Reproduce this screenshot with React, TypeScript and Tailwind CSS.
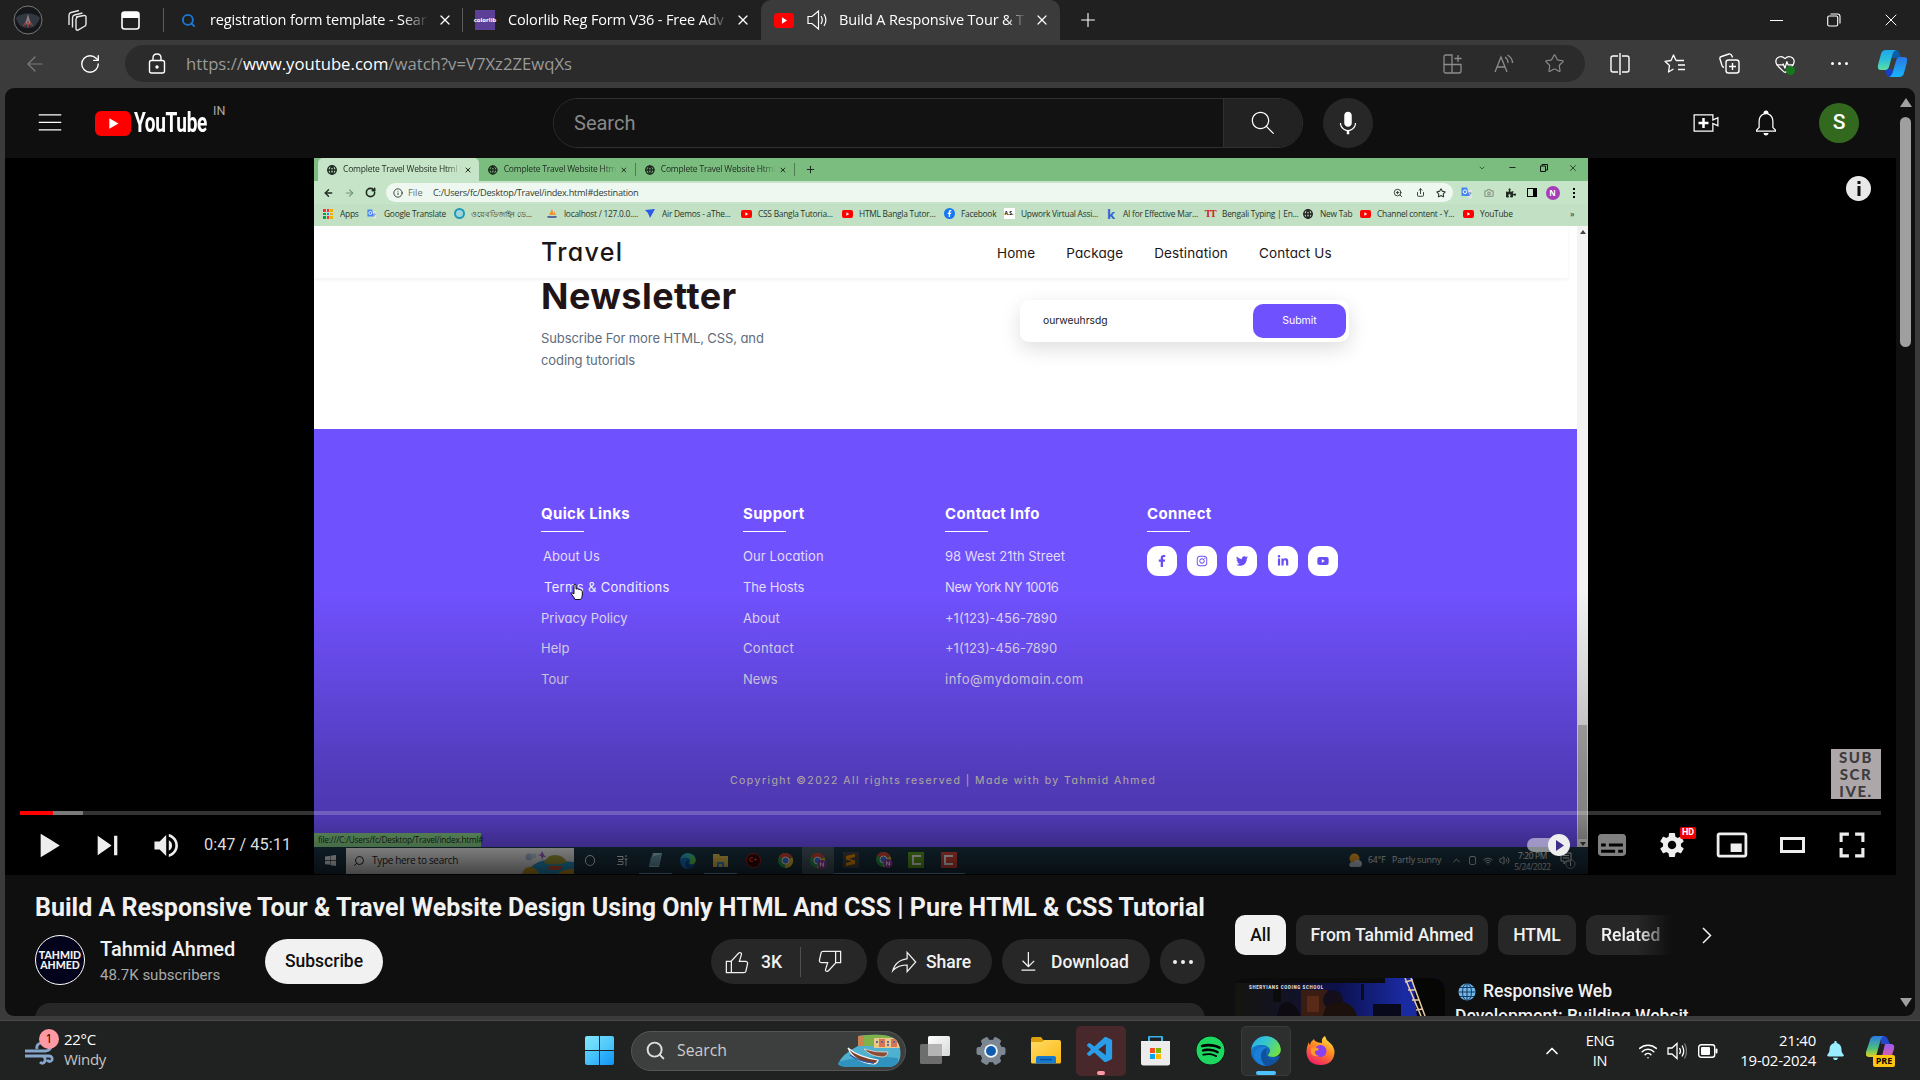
import React from "react";
import {
  Star, X, Plus, RotateCw, ArrowLeft, ArrowRight, Globe, Info, Search,
  ChevronUp, ChevronDown, Wifi, Volume2, HeartPulse, Share, ZoomIn,
  Camera, Minus,
} from "lucide-react";
import { FaFacebookF, FaInstagram, FaTwitter, FaLinkedinIn, FaYoutube, FaSpotify, FaPuzzlePiece, FaBell } from "react-icons/fa";
import { VscVscode } from "react-icons/vsc";

const UI = "font-['Open_Sans',sans-serif]";
const POP = "font-['Inter',sans-serif] [font-feature-settings:'cv11']";

type BoxProps = { className?: string; children?: React.ReactNode };

const Cell = ({ className = "", children }: BoxProps) => (
  <div className={`flex shrink-0 items-center justify-center ${className}`}>{children}</div>
);

const Glyph = ({ d, size, view = "0 0 24 24", className = "", evenOdd = false }: {
  d: string; size: number; view?: string; className?: string; evenOdd?: boolean;
}) => (
  <svg width={size} height={size} viewBox={view} className={`shrink-0 ${className}`} fill="currentColor" fillRule={evenOdd ? "evenodd" : "nonzero"}>
    <path d={d} />
  </svg>
);

const THUMB =
  "M18.77,11h-4.23l1.52-4.94C16.38,5.03,15.54,4,14.38,4c-0.58,0-1.14,0.24-1.52,0.65L7,11H3v10h4h1h9.43 c1.06,0,1.98-0.67,2.19-1.61l1.34-6C21.23,12.15,20.18,11,18.77,11z M7,20H4v-8h3V20z M19.98,13.17l-1.34,6 C18.54,19.65,18.03,20,17.43,20H8v-8.61l5.6-6.06C13.79,5.12,14.08,5,14.38,5c0.26,0,0.5,0.11,0.63,0.3 c0.07,0.1,0.15,0.26,0.09,0.47l-1.52,4.94L13.18,12h1.35h4.23c0.41,0,0.8,0.17,1.03,0.46C19.92,12.61,20.05,12.86,19.98,13.17z";
const SHARE =
  "M15,5.63L20.66,12L15,18.37V15v-1h-1c-3.96,0-7.14,1-9.75,3.09c1.84-4.07,5.11-6.4,9.89-7.1L15,9.86V9V5.63 M14,3v6 C6.22,10.13,3.11,15.33,2,21c2.78-3.97,6.44-6,12-6v6l8-9L14,3L14,3z";
const DOWNLOAD = "M17 18v1H6v-1h11zm-.5-6.6-.7-.7-3.8 3.7V4h-1v10.4l-3.8-3.8-.7.7 5 5 5-4.9z";
const MIC =
  "M12 3C10.34 3 9 4.37 9 6.07V11.93C9 13.63 10.34 15 12 15C13.66 15 15 13.63 15 11.93V6.07C15 4.37 13.66 3 12 3Z M18.5 12H17.5C17.5 15.03 15.03 17.5 12 17.5C8.97 17.5 6.5 15.03 6.5 12H5.5C5.5 15.24 7.89 17.93 11 18.41V21H13V18.41C16.11 17.93 18.5 15.24 18.5 12Z";
const SEARCH =
  "M20.87,20.17l-5.59-5.59C16.35,13.35,17,11.75,17,10c0-3.87-3.13-7-7-7s-7,3.13-7,7s3.13,7,7,7c1.75,0,3.35-0.65,4.58-1.71 l5.59,5.59L20.87,20.17z M10,16c-3.31,0-6-2.69-6-6s2.69-6,6-6s6,2.69,6,6S13.31,16,10,16z";
const CREATE =
  "M14,13h-3v3H9v-3H6v-2h3V8h2v3h3V13z M17,6H3v12h14v-6.39l4,1.83V8.56l-4,1.83V6 M18,5v3.83L22,7v8l-4-1.83V19H2V5H18L18,5 z";
const BELL =
  "M10,20h4c0,1.1-0.9,2-2,2S10,21.1,10,20z M20,17.35V19H4v-1.65l2-1.88v-5.15c0-2.92,1.56-5.22,4-5.98V3.96 c0-1.42,1.49-2.5,2.99-1.76C13.64,2.52,14,3.23,14,3.96l0,0.39c2.44,0.75,4,3.06,4,5.98v5.15L20,17.35z M19,17.77l-2-1.88v-5.47 c0-2.47-1.19-4.36-3.13-5.1c-1.26-0.53-2.64-0.5-3.84,0.03C8.15,6.11,7,7.99,7,10.42v5.47l-2,1.88V18h14V17.77z";
const MENU = "M21,6H3V5h18V6z M21,11H3v1h18V11z M21,17H3v1h18V17z";
const PLAY = "M 12,26 18.5,22 18.5,14 12,10 z M 18.5,22 25,18 25,18 18.5,14 z";
const NEXT = "M 12,24 20.5,18 12,12 V 24 z M 22,12 v 12 h 2 V 12 h -2 z";
const VOLUME =
  "M8,21 L12,21 L17,26 L17,10 L12,15 L8,15 L8,21 Z M19,14 L19,22 C20.48,21.32 21.5,19.77 21.5,18 C21.5,16.26 20.48,14.74 19,14 Z M19,11.29 C21.89,12.15 24,14.83 24,18 C24,21.17 21.89,23.85 19,24.71 L19,26.77 C23.01,25.86 26,22.28 26,18 C26,13.72 23.01,10.14 19,9.23 L19,11.29 Z";
const CAPTIONS =
  "M11,11 C9.9,11 9,11.9 9,13 L9,23 C9,24.1 9.9,25 11,25 L25,25 C26.1,25 27,24.1 27,23 L27,13 C27,11.9 26.1,11 25,11 L11,11 Z M11,17 L14,17 L14,19 L11,19 L11,17 Z M20,23 L11,23 L11,21 L20,21 L20,23 Z M25,23 L22,23 L22,21 L25,21 L25,23 Z M25,19 L16,19 L16,17 L25,17 L25,19 Z";
const SETTINGS =
  "m 23.94,18.78 c .03,-0.25 .05,-0.51 .05,-0.78 0,-0.27 -0.02,-0.52 -0.05,-0.78 l 1.68,-1.32 c .15,-0.12 .19,-0.33 .09,-0.51 l -1.6,-2.76 c -0.09,-0.17 -0.31,-0.24 -0.48,-0.17 l -1.99,.8 c -0.41,-0.32 -0.86,-0.58 -1.35,-0.78 l -0.30,-2.12 c -0.02,-0.19 -0.19,-0.33 -0.39,-0.33 l -3.2,0 c -0.2,0 -0.36,.14 -0.39,.33 l -0.30,2.12 c -0.48,.2 -0.93,.47 -1.35,.78 l -1.99,-0.8 c -0.18,-0.07 -0.39,0 -0.48,.17 l -1.6,2.76 c -0.10,.17 -0.05,.39 .09,.51 l 1.68,1.32 c -0.03,.25 -0.05,.52 -0.05,.78 0,.26 .02,.52 .05,.78 l -1.68,1.32 c -0.15,.12 -0.19,.33 -0.09,.51 l 1.6,2.76 c .09,.17 .31,.24 .48,.17 l 1.99,-0.8 c .41,.32 .86,.58 1.35,.78 l .30,2.12 c .02,.19 .19,.33 .39,.33 l 3.2,0 c .2,0 .36,-0.14 .39,-0.33 l .30,-2.12 c .48,-0.2 .93,-0.47 1.35,-0.78 l 1.99,.8 c .18,.07 .39,0 .48,-0.17 l 1.6,-2.76 c .09,-0.17 .05,-0.39 -0.09,-0.51 l -1.68,-1.32 0,0 z m -5.94,2.01 c -1.54,0 -2.8,-1.25 -2.8,-2.8 0,-1.54 1.25,-2.8 2.8,-2.8 1.54,0 2.8,1.25 2.8,2.8 0,1.54 -1.25,2.8 -2.8,2.8 l 0,0 z";
const MINI =
  "M25,17 L17,17 L17,23 L25,23 L25,17 Z M29,25 L29,10.98 C29,9.88 28.1,9 27,9 L9,9 C7.9,9 7,9.88 7,10.98 L7,25 C7,26.1 7.9,27 9,27 L27,27 C28.1,27 29,26.1 29,25 Z M27,25.02 L9,25.02 L9,10.97 L27,10.97 L27,25.02 Z";
const FULL =
  "M10,16h2v-4h4v-2h-6z M20,10v2h4v4h2v-6z M24,24h-4v2h6v-6h-2z M12,20h-2v6h6v-2h-4z";

const YtMark = ({ w, h }: { w: number; h: number }) => (
  <svg width={w} height={h} viewBox="0 0 36 25" preserveAspectRatio="none" className="shrink-0">
    <rect width="36" height="25" rx="6" fill="#ff0000" />
    <path d="M14.3 7.2v10.6l9.2-5.3z" fill="#fff" />
  </svg>
);

const GoogleTranslate = ({ size }: { size: number }) => (
  <svg width={size} height={size} viewBox="0 0 24 24" className="shrink-0">
    <path d="M9 6h13v17H14z" fill="#dfe3ea" />
    <path d="M1 1h11l5 17H1z" fill="#4687f4" />
    <circle cx="8" cy="9.5" r="3.6" fill="none" stroke="#fff" strokeWidth="2" />
    <path d="M15 12h6M18 11v2M16 18l4-6" stroke="#5f7fb8" strokeWidth="1.4" />
  </svg>
);

/* ---------- Edge window ---------- */

const TabStrip = () => (
  <div className={`flex h-10 shrink-0 bg-[#202020] text-[14.5px] text-white ${UI}`}>
    <Cell className="w-14">
      <svg width="30" height="30" viewBox="0 0 30 30">
        <circle cx="15" cy="15" r="14" fill="#15171b" stroke="#777" strokeWidth="1" />
        <path d="M3 13c4-6 20-6 24 0-3 7-6 10-12 10S5 20 3 13z" fill="#39414c" opacity=".8" />
        <path d="M15 9l2 7 3 5-4-2-1 3-1-3-4 2 3-5z" fill="#8f7c7e" />
        <path d="M15 16v7M11 20l2-2M19 20l-2-2" stroke="#9d2a2a" strokeWidth="1.2" />
      </svg>
    </Cell>
    <Cell className="w-11 pr-[3px]">
      <svg width="23" height="23" viewBox="0 0 23 23" fill="none" stroke="#e8e8e8" strokeWidth="1.4">
        <path d="M11 8l8-1.500q2-.2 2 1.500v7q0 1.500-1 2l-7 4q-2 .8-2-1.500v-9q0-2 2-2.600z" />
        <path d="M7.500 18.500V9q0-2.500 2-3l8-2M4 16V6.500q0-2.500 2-3l8-2" />
      </svg>
    </Cell>
    <Cell className="w-[60px]">
      <svg width="19" height="19" viewBox="0 0 19 19">
        <rect x="1" y="1" width="17" height="17" rx="2.500" fill="none" stroke="#fff" strokeWidth="1.600" />
        <path d="M1 3q0-2 2-2h13q2 0 2 2v4H1zM1 6h5v1H1z" fill="#fff" />
      </svg>
    </Cell>
    <div className="my-2 ml-[3px] w-px bg-[#5c5c5c]" />
    <div className="flex w-[298px] shrink-0 items-center pl-[17px]">
      <Search size={15} strokeWidth={3} color="#1a7ad9" />
      <span className="ml-[14px] w-[219px] overflow-hidden whitespace-nowrap tracking-[-0.15px] [mask-image:linear-gradient(to_right,black_88%,transparent)]">registration form template - Sear</span>
      <X size={16} className="ml-[8px]" strokeWidth={1.8} />
    </div>
    <div className="my-2 w-px bg-[#5c5c5c]" />
    <div className="flex w-[298px] shrink-0 items-center pl-[12px]">
      <Cell className="h-5 w-5 bg-[#5c3f96] text-[6px] font-bold">colorlib</Cell>
      <span className="ml-[13px] w-[220px] overflow-hidden whitespace-nowrap tracking-[-0.15px] [mask-image:linear-gradient(to_right,black_90%,transparent)]">Colorlib Reg Form V36 - Free Adv</span>
      <X size={16} className="ml-[7px]" strokeWidth={1.8} />
    </div>
    <div className="flex w-[299px] shrink-0 items-center rounded-t-[10px] bg-[#3b3b3b] pl-[13px]">
      <YtMark w={20} h={15} />
      <svg width="21" height="20" viewBox="0 0 21 20" fill="none" stroke="#fff" strokeWidth="1.200" className="ml-[13px]">
        <path d="M1 6.500h4L11.500 1v18L5 13.500H1zM14 6q2.500 4 0 8M17 4q3.800 6 0 12" />
      </svg>
      <span className="ml-[11px] w-[187px] overflow-hidden whitespace-nowrap tracking-[-0.15px] [mask-image:linear-gradient(to_right,black_90%,transparent)]">Build A Responsive Tour &amp; T</span>
      <X size={16} className="ml-[8px]" strokeWidth={1.8} />
    </div>
    <Cell className="w-[56px]"><Plus size={22} strokeWidth={1.2} /></Cell>
    <div className="flex grow justify-end">
      <Cell className="w-[57px]"><div className="h-px w-[13px] bg-white" /></Cell>
      <Cell className="w-[57px]">
        <svg width="14" height="14" viewBox="0 0 14 14" fill="none" stroke="#fff" strokeWidth="1.100">
          <rect x=".7" y="3" width="10" height="10" rx="1.500" /><path d="M3.500 1h7q2.500 0 2.500 2.500v7" />
        </svg>
      </Cell>
      <Cell className="w-[58px]"><X size={20} strokeWidth={1.2} /></Cell>
    </div>
  </div>
);

const AddressBar = () => (
  <div className={`flex h-12 shrink-0 items-center bg-[#3b3b3b] pb-px text-white ${UI}`}>
    <Cell className="ml-[21px] w-7 text-[#7d7d7d]"><ArrowLeft size={24} strokeWidth={1.2} /></Cell>
    <Cell className="ml-[27px] w-7"><RotateCw size={22} strokeWidth={1.5} /></Cell>
    <div className="ml-[21px] flex h-[37px] w-[1460px] shrink-0 items-center rounded-full bg-[#2b2b2b] pl-[21px]">
      <svg width="22" height="22" viewBox="0 0 22 22" fill="none" stroke="#fff" strokeWidth="1.400">
        <rect x="3.500" y="7.500" width="15" height="12.500" rx="2" /><path d="M7 7.500V5q0-4 4-4t4 4v2.500" /><circle cx="11" cy="14" r="1" fill="#fff" />
      </svg>
      <div className="ml-[18px] grow pt-px text-[16.700px] whitespace-nowrap text-[#9a9a9a]">
        https://<span className="text-white">www.youtube.com</span>/watch?v=V7Xz2ZEwqXs
      </div>
      <Cell className="w-[50px] text-[#8c8c8c]">
        <svg width="20" height="20" viewBox="0 0 20 20" fill="none" stroke="currentColor" strokeWidth="1.300">
          <path d="M1 10.500V3q0-2 2-2h6v18H3q-2 0-2-2v-6.500h17V17q0 2-2 2H9M15 1v7M11.500 4.500h7" />
        </svg>
      </Cell>
      <Cell className="w-[51px] text-[#8c8c8c]">
        <svg width="20" height="20" viewBox="0 0 20 20" fill="none" stroke="currentColor" strokeWidth="1.300">
          <path d="M1 18L7 3l6 15M3 13h8M11 3q3 2 3 6M13.500 1q5 3 5 8" />
        </svg>
      </Cell>
      <Cell className="mr-[6px] w-[50px] text-[#8c8c8c]"><Star size={21} strokeWidth={1.3} /></Cell>
    </div>
    <Cell className="ml-[7px] w-[55px]">
      <svg width="20" height="22" viewBox="0 0 20 22" fill="none" stroke="#fff" strokeWidth="1.400">
        <path d="M8 3H3Q1 3 1 5v12q0 2 2 2h5M12 3h5q2 0 2 2v12q0 2-2 2h-5M10 0v22" />
      </svg>
    </Cell>
    <Cell className="w-[55px]">
      <svg width="22" height="20" viewBox="0 0 22 20" fill="none" stroke="#fff" strokeWidth="1.300" strokeLinejoin="round">
        <path d="M12 6.500L9.500 1 7 6.500l-6 .8 4.500 4.200L4.500 18l5-3M12 6.500h8M14 11h7M14 15.500h7" />
      </svg>
    </Cell>
    <Cell className="w-[55px]">
      <svg width="21" height="21" viewBox="0 0 21 21" fill="none" stroke="#fff" strokeWidth="1.400">
        <rect x="7" y="7" width="13" height="13" rx="2.500" /><path d="M13.500 10v7M10 13.500h7M5 14.500q-1.500-.5-2-2L1 6Q.5 4 2.500 3.500L10 1q2-.5 3 2l.5 1.500" />
      </svg>
    </Cell>
    <Cell className="w-[55px]">
      <div className="relative">
        <HeartPulse size={22} strokeWidth={1.4} />
        <div className="absolute top-[13px] left-[12px] h-[9px] w-[9px] rounded-full bg-[#15791c]" />
      </div>
    </Cell>
    <Cell className="w-[55px] gap-[4px]">
      {[0, 1, 2].map((i) => <div key={i} className="h-[3px] w-[3px] rounded-full bg-white" />)}
    </Cell>
    <Cell className="w-[51px]">
      <svg width="31" height="27" viewBox="0 0 31 27">
        <defs>
          <linearGradient id="cpA" x1="0" y1="0" x2="0" y2="1"><stop offset="0" stopColor="#1fa6ec" /><stop offset=".5" stopColor="#2bc0d8" /><stop offset="1" stopColor="#5fe0a0" /></linearGradient>
          <linearGradient id="cpB" x1="0" y1="0" x2="0" y2="1"><stop offset="0" stopColor="#2a78e8" /><stop offset="1" stopColor="#18b4f8" /></linearGradient>
        </defs>
        <path d="M15 0h4q3 0 4 5l1 3H14z" fill="#0b5fa8" />
        <path d="M7 19l8 0 3 8h-5q-3 0-4-4z" fill="#1740c8" />
        <path d="M9 0h10q-3 1-4 6l-3 11q-1 3-4 3H4q-4 0-3-5L4 4q1-4 5-4z" fill="url(#cpA)" />
        <path d="M22 27H12q3-1 4-6l3-10q1-4 4-4h4q4 0 3 5l-3 11q-1 4-5 4z" fill="url(#cpB)" />
      </svg>
    </Cell>
  </div>
);

/* ---------- YouTube ---------- */

const Masthead = () => (
  <div className="flex h-[70px] shrink-0 items-center text-white">
    <Cell className="ml-[30px] w-[30px]"><Glyph d={MENU} size={30} /></Cell>
    <div className="ml-[30px] flex w-[458px] shrink-0 items-center">
      <YtMark w={36} h={25} />
      <div className="ml-[3px] w-[74px]">
        <span className="inline-block origin-left scale-x-[0.68] font-['Roboto'] text-[28px] leading-7 font-bold tracking-[-0.5px]">YouTube</span>
      </div>
      <span className="-mt-[24px] ml-[5px] font-['Roboto'] text-[12.5px] text-[#aaa]">IN</span>
    </div>
    <div className="flex h-[50px] w-[750px] shrink-0 overflow-hidden rounded-full border border-[#303030]">
      <div className="flex w-[670px] shrink-0 items-center border-r border-[#303030] bg-[#121212] pl-5 font-['Roboto'] text-[20px] text-[#888]">Search</div>
      <Cell className="grow bg-[#222]"><Glyph d={SEARCH} size={30} /></Cell>
    </div>
    <Cell className="ml-5 h-[50px] w-[50px] rounded-full bg-[#272727]"><Glyph d={MIC} size={30} /></Cell>
    <div className="grow" />
    <Cell className="w-[50px]"><Glyph d={CREATE} size={30} /></Cell>
    <Cell className="ml-[10px] w-[50px]"><Glyph d={BELL} size={30} /></Cell>
    <Cell className="mr-[37px] ml-[28px] h-10 w-10 rounded-full bg-[#33691e] font-['Roboto'] text-[21px] font-medium">S</Cell>
  </div>
);

const travelTabs = [
  { w: "w-[161px]", active: true },
  { w: "w-[157px]", active: false },
  { w: "w-[159px]", active: false },
];

const BookmarkIcon = ({ kind }: { kind: string }) => {
  switch (kind) {
    case "apps":
      return (
        <div className="grid grid-cols-3 gap-px">
          {["bg-red-500", "bg-red-500", "bg-yellow-500", "bg-green-600", "bg-blue-500", "bg-yellow-500", "bg-green-600", "bg-red-500", "bg-yellow-500"].map((c, i) => (
            <div key={i} className={`h-[2.5px] w-[2.5px] ${c}`} />
          ))}
        </div>
      );
    case "tr": return <GoogleTranslate size={10} />;
    case "globe": return <Globe size={10} strokeWidth={3.500} color="#222" />;
    case "swirl": return <div className="h-[11px] w-[11px] rounded-full border-2 border-[#1f9ab5] bg-[#9fd6dd]" />;
    case "sail": return <svg width="10" height="10" viewBox="0 0 10 10"><path d="M5 0l2 6H2zM7 2l2 4H7z" fill="#f0922e" /><path d="M0 7h10l-1 2H1z" fill="#5a6a9a" /></svg>;
    case "bird": return <svg width="10" height="9" viewBox="0 0 10 9"><path d="M0 1l10-1-5 9-2-5z" fill="#2a5be8" /></svg>;
    case "fb": return <div className="flex h-[11px] w-[11px] items-center justify-center rounded-full bg-[#1877f2]"><FaFacebookF size={7} color="#fff" /></div>;
    case "as": return <div className="flex h-[11px] w-[11px] items-center justify-center bg-white text-[5px] font-bold text-black">A.S.</div>;
    case "k": return <span className="text-[13px] leading-none font-bold text-[#2f62d8]">k</span>;
    case "tt": return <span className="font-['Liberation_Serif'] text-[10px] leading-none font-bold tracking-[-1.500px] text-[#c22]">TT</span>;
    default: return <YtMark w={11} h={8} />;
  }
};

const bookmarks = [
  { kind: "apps", text: "Apps", w: "w-[44px]" },
  { kind: "tr", text: "Google Translate", w: "w-[87px]" },
  { kind: "swirl", text: "ওয়েব ডিজাইন ডে...", w: "w-[93px]" },
  { kind: "sail", text: "localhost / 127.0.0....", w: "w-[98px]" },
  { kind: "bird", text: "Air Demos - aThe...", w: "w-[96px]" },
  { kind: "yt", text: "CSS Bangla Tutoria...", w: "w-[101px]" },
  { kind: "yt", text: "HTML Bangla Tutor...", w: "w-[102px]" },
  { kind: "fb", text: "Facebook", w: "w-[60px]" },
  { kind: "as", text: "Upwork Virtual Assi...", w: "w-[102px]" },
  { kind: "k", text: "AI for Effective Mar...", w: "w-[99px]" },
  { kind: "tt", text: "Bengali Typing | En...", w: "w-[98px]" },
  { kind: "globe", text: "New Tab", w: "w-[57px]" },
  { kind: "yt", text: "Channel content - Y...", w: "w-[103px]" },
  { kind: "yt", text: "YouTube", w: "w-[108px]" },
];

const TravelBrowser = () => (
  <div className={`flex shrink-0 flex-col text-[#1f2b20] ${UI}`}>
    <div className="flex h-[23px] items-stretch bg-[#7bbd7f] pl-[4px] text-[8.500px]">
      {travelTabs.map((t, i) => (
        <div key={i} className={`flex shrink-0 items-center pl-[9px] ${t.w} ${t.active ? "rounded-t-[5px] bg-[#c6e4c7]" : ""}`}>
          <Globe size={10} strokeWidth={3.500} />
          <span className="ml-[6px] w-[118px] overflow-hidden whitespace-nowrap tracking-[-0.2px] [mask-image:linear-gradient(to_right,black_88%,transparent)]">Complete Travel Website Html C</span>
          <X size={8} strokeWidth={3} className="ml-[3px]" />
          {!t.active && <div className="ml-[7px] h-[13px] w-px bg-[#4d7c50]" />}
        </div>
      ))}
      <Cell className="ml-[5px] w-5"><Plus size={11} strokeWidth={2.200} /></Cell>
      <div className="grow" />
      <Cell className="w-[30px] pb-1"><ChevronDown size={8} /></Cell>
      <Cell className="w-[31px] pb-1"><Minus size={9} strokeWidth={3} /></Cell>
      <Cell className="w-[31px] pb-1">
        <svg width="8" height="8" viewBox="0 0 8 8" fill="none" stroke="#111"><path d="M.5 2h5v5.500h-5zM2 2V.5h5.500V6H6" /></svg>
      </Cell>
      <Cell className="mr-[1px] w-[28px] pb-1"><X size={10} strokeWidth={2} /></Cell>
    </div>
    <div className="flex h-[23px] items-center bg-[#c6e4c7]">
      <Cell className="ml-[9px] w-[11px]"><ArrowLeft size={12} strokeWidth={3} /></Cell>
      <Cell className="ml-[10px] w-[11px] text-[#74967a]"><ArrowRight size={12} strokeWidth={2.500} /></Cell>
      <Cell className="ml-[10px] w-[11px]"><RotateCw size={11} strokeWidth={3.500} /></Cell>
      <div className="ml-[10px] flex h-[19px] w-[1067px] shrink-0 items-center rounded-full bg-[#eff8f0] pl-[7px] text-[9.200px] text-[#2f3a30]">
        <Info size={10} strokeWidth={2.200} />
        <span className="ml-[5px] w-[25px] text-[#667068]">File</span>
        <span className="grow tracking-[-0.260px] whitespace-nowrap">C:/Users/fc/Desktop/Travel/index.html#destination</span>
        <ZoomIn size={10} strokeWidth={2.200} />
        <Share size={9} strokeWidth={2.500} className="ml-[13px]" />
        <Star size={10} strokeWidth={2.500} className="mr-[7px] ml-[11px]" />
      </div>
      <Cell className="ml-[3px] w-[22px]"><GoogleTranslate size={12} /></Cell>
      <Cell className="w-[22px] text-[#8e9a8f]"><Camera size={10} strokeWidth={3} /></Cell>
      <Cell className="w-[21px]"><FaPuzzlePiece size={10} /></Cell>
      <Cell className="w-[21px]"><div className="h-[9px] w-[10px] border-[1.5px] border-r-4 border-black" /></Cell>
      <Cell className="w-[21px]"><Cell className="h-[14px] w-[14px] rounded-full bg-[#a63cb8] text-[8px] font-bold text-white">N</Cell></Cell>
      <Cell className="w-[22px] flex-col gap-[2px]">
        {[0, 1, 2].map((i) => <div key={i} className="h-[2px] w-[2px] bg-black" />)}
      </Cell>
    </div>
    <div className="flex h-[22px] items-center overflow-hidden bg-[#c2e0c4] pb-[2px] pl-[8px] text-[8.400px] text-[#2a352b]">
      {bookmarks.map((b, i) => (
        <div key={i} className={`flex shrink-0 items-center ${b.w}`}>
          <Cell className="w-[12px]"><BookmarkIcon kind={b.kind} /></Cell>
          <span className="ml-[6px] tracking-[-0.25px] whitespace-nowrap">{b.text}</span>
        </div>
      ))}
      <span className="text-[9px]">»</span>
    </div>
  </div>
);

const footerColumns = [
  {
    title: "Quick Links",
    items: [
      ["About Us", "pl-[2px]"], ["Terms & Conditions", "pl-[3px] text-[#f0edff] tracking-[0.33px]"],
      ["Privacy Policy", ""], ["Help", ""], ["Tour", ""],
    ],
  },
  {
    title: "Support",
    items: [["Our Location", "tracking-[0.1px]"], ["The Hosts", "tracking-[-0.15px]"], ["About", ""], ["Contact", "tracking-[0.35px]"], ["News", ""]],
  },
  {
    title: "Contact Info",
    items: [
      ["98 West 21th Street", ""], ["New York NY 10016", "tracking-[-0.4px]"],
      ["+1(123)-456-7890", ""], ["+1(123)-456-7890", ""], ["info@mydomain.com", "tracking-[0.5px]"],
    ],
  },
];

const FooterTitle = ({ children }: BoxProps) => (
  <>
    <div className="h-[24px] text-[15px] leading-6 font-bold tracking-[0.35px] whitespace-nowrap text-white">{children}</div>
    <div className="mt-[5px] h-px w-[43px] bg-white" />
  </>
);

const TravelPage = () => (
  <div className={`flex h-[621px] shrink-0 ${POP}`}>
    <div className="flex w-[1263px] shrink-0 flex-col bg-white">
      <div className="mr-[9px] flex h-[52px] shrink-0 items-center pt-[2px] pl-[227px] text-[#1d1517] shadow-[0_2px_3px_rgba(0,0,0,0.05)]">
        <span className="w-[456px] text-[25px] font-medium tracking-[1.300px]">Travel</span>
        <div className="flex gap-[31px] text-[13.500px] tracking-[0.120px] whitespace-nowrap">
          <span>Home</span><span>Package</span><span>Destination</span><span>Contact Us</span>
        </div>
      </div>
      <div className="flex h-[151px] shrink-0 pl-[227px]">
        <div className="w-[479px] shrink-0">
          <div className="-mt-px h-[38px] text-[36px] leading-[38px] font-bold tracking-[0.450px] text-[#211416]">Newsletter</div>
          <div className="mt-[12px] w-[260px] text-[13px] leading-[22px] tracking-[-0.100px] text-[#5d6c7c]">Subscribe For more HTML, CSS, and<br />coding tutorials</div>
        </div>
        <div className="mt-[22px] flex h-[42px] w-[329px] items-center rounded-[9px] bg-white pl-[23px] shadow-[0_7px_20px_rgba(0,0,0,0.13)]">
          <span className="w-[210px] text-[10.300px] text-[#222]">ourweuhrsdg</span>
          <Cell className="h-[34px] w-[93px] rounded-[10px] bg-[#7051fe] text-[10.500px] text-white">Submit</Cell>
        </div>
      </div>
      <div className="flex h-[418px] shrink-0 flex-col bg-[#7051fe] pl-[227px]">
        <div className="mt-[73px] flex h-[257px] text-[#e2dcf7]">
          {footerColumns.map((c, i) => (
            <div key={i} className="w-[202px] shrink-0">
              <FooterTitle>{c.title}</FooterTitle>
              <div className="mt-[9px] text-[13px] leading-[30.800px] whitespace-nowrap">
                {c.items.map(([t, cls], j) => <div key={j} className={cls}>{t}</div>)}
              </div>
            </div>
          ))}
          <div>
            <FooterTitle>Connect</FooterTitle>
            <div className="mt-[14px] flex gap-[10.200px] text-[12px] text-[#6a4df5]">
              {[FaFacebookF, FaInstagram, FaTwitter, FaLinkedinIn, FaYoutube].map((I, k) => (
                <Cell key={k} className="h-[30px] w-[30px] rounded-[11px] bg-white"><I /></Cell>
              ))}
            </div>
          </div>
        </div>
        <div className="mt-[13px] pl-[189px] text-[10.500px] leading-[18px] tracking-[1.450px] whitespace-nowrap text-[#eee8da]">
          Copyright ©2022 All rights reserved | Made with by Tahmid Ahmed
        </div>
      </div>
    </div>
    <div className="flex w-[11px] flex-col items-center bg-[#f3f3f3]">
      <div className="mt-[4px] border-x-[3px] border-b-[4px] border-x-transparent border-b-[#444]" />
      <div className="mt-[491px] h-[114px] w-[9px] bg-[#bcbcbc]" />
      <div className="mt-[3px] border-x-[3px] border-t-[4px] border-x-transparent border-t-[#444]" />
    </div>
  </div>
);

const ChromeBall = ({ badge = false }: { badge?: boolean }) => (
  <svg width="18" height="18" viewBox="0 0 18 18">
    <circle cx="8.500" cy="8.500" r="7.500" fill="#2da44e" />
    <path d="M8.500 8.500L2 4.800A7.500 7.500 0 0 1 15 4.800z" fill="#e04434" />
    <path d="M8.500 8.500L15.500 5.500A7.500 7.500 0 0 1 8 16z" fill="#f7c52d" />
    <circle cx="8.500" cy="8.500" r="3.500" fill="#3f7ff0" stroke="#fff" />
    {badge && <circle cx="13" cy="12.500" r="4.500" fill="#a63cb8" />}
    {badge && <path d="M11.500 14.500v-4l3 4v-4" stroke="#fff" fill="none" />}
  </svg>
);

const EdgeBall = ({ size, id }: { size: number; id: string }) => (
  <svg width={size} height={size} viewBox="0 0 30 30">
    <defs>
      <linearGradient id={`${id}a`} x1="0" y1="0" x2="1" y2=".5"><stop offset="0" stopColor="#28a8e8" /><stop offset=".5" stopColor="#35c6cf" /><stop offset="1" stopColor="#6be04a" /></linearGradient>
      <linearGradient id={`${id}b`} x1="0" y1="0" x2="1" y2="1"><stop offset="0" stopColor="#1689dc" /><stop offset="1" stopColor="#114a9c" /></linearGradient>
      <clipPath id={`${id}c`}><circle cx="15" cy="15" r="15" /></clipPath>
    </defs>
    <g clipPath={`url(#${id}c)`}>
      <path d="M0 0h12l8 14-3 4 4 3 8-1q-3 10-14 10H0z" fill={`url(#${id}b)`} />
      <path d="M0 14C1 5 7 0 15 0c9 0 15 6 15 13 0 5-4 8-8 8-3 0-5-1-5-2s2-2 2-4.500C19 11 15 9 10 9 5 9 1 11 0 14z" fill={`url(#${id}a)`} />
      <path d="M10 20c0-5 3-8 7-8-5-3-13 0-14 7 0 6 6 11 12 11-3-2-5-6-5-10z" fill="#1b7fd8" />
      <path d="M10 20c0-4 2-7 6-8-2 4-1 10 5 12 3 1 6 0 8-2-3 6-8 8-13 8-4-2-6-6-6-10z" fill="#11529f" />
    </g>
  </svg>
);

const VideoTaskbar = () => (
  <div className={`flex h-[27px] shrink-0 items-center bg-[#1b3544] text-[#eee] ${UI}`}>
    <Cell className="w-8">
      <svg width="11" height="11" viewBox="0 0 11 11" fill="#eee"><path d="M0 1.500L5 1v4H0zM5.500 .8L11 0v5H5.500zM0 5.700h5v4L0 9.200zM5.500 5.700H11V11l-5.500-.8z" /></svg>
    </Cell>
    <div className="flex h-[26px] w-[228px] shrink-0 items-center overflow-hidden bg-[#f3f3f3] text-[#222]">
      <Search size={12} strokeWidth={2} className="ml-[7px] -scale-x-100" />
      <span className="ml-[7px] w-[150px] text-[10px] tracking-[-0.320px] whitespace-nowrap">Type here to search</span>
      <svg width="52" height="26" viewBox="0 0 52 26" className="shrink-0">
        <path d="M8 20q8-8 18-8t26 2v12H8z" fill="#27a3d8" />
        <path d="M0 26q2-7 8-7t9 7z" fill="#d8a520" /><path d="M22 15q3-8 11-8t12 7q-10 5-23 1z" fill="#a9a43a" />
        <path d="M25 18h16l-3 4H28z" fill="#e05a3a" /><circle cx="7" cy="9" r="3.500" fill="#aac4e0" /><circle cx="12" cy="8" r="2.500" fill="#c4d4e8" />
        <path d="M20 3l2 4 2 2-3 0-1 3-1-4-3-1 3-1z" fill="#a45bd0" /><path d="M36 26q4-5 16-5v5z" fill="#d8a520" />
      </svg>
    </div>
    <Cell className="w-8"><div className="h-[11px] w-[10px] rounded-full border-[1.5px] border-[#eee]" /></Cell>
    <Cell className="w-[33px]">
      <svg width="11" height="11" viewBox="0 0 11 11" fill="none" stroke="#eee"><path d="M0 1.500h6v3H1M0 9.500h6v-3H1M9 0v2M9 4v7M7.500 4h3" /></svg>
    </Cell>
    <Cell className="h-full w-[33px] border-b border-[#76b9ed]">
      <svg width="15" height="17" viewBox="0 0 15 17"><path d="M5 1h9l-3 14H1z" fill="#a9cfdc" /><path d="M3 5l10-3-2 12H1z" fill="#6fa3b8" /></svg>
    </Cell>
    <Cell className="w-8"><EdgeBall size={16} id="ev" /></Cell>
    <Cell className="h-full w-[33px] border-b border-[#76b9ed]">
      <svg width="15" height="14" viewBox="0 0 15 14"><path d="M0 1h6l1 2h8v11H0z" fill="#f6cf57" /><path d="M4 14V9h7v5H9v-3H6v3z" fill="#3b8ee0" /></svg>
    </Cell>
    <Cell className="w-8"><Cell className="h-[15px] w-[15px] rounded-full border border-[#c22] bg-[#300] text-[7px] font-bold text-[#f44]">C+</Cell></Cell>
    <Cell className="w-[33px]"><ChromeBall /></Cell>
    <Cell className="h-full w-8 bg-white/20"><ChromeBall badge /></Cell>
    <Cell className="h-full w-[33px] border-b border-[#76b9ed]">
      <Cell className="h-4 w-4 bg-[#484848]">
        <svg width="9" height="12" viewBox="0 0 9 12"><path d="M9 0v3L3 4.700 9 6.500V10l-9 2V9l6-1.700L0 5.500V2z" fill="#ff9800" /></svg>
      </Cell>
    </Cell>
    <Cell className="h-full w-[33px] border-b border-[#76b9ed]"><ChromeBall badge /></Cell>
    <Cell className="h-full w-8 border-b border-[#76b9ed]">
      <Cell className="h-4 w-4 bg-[#62a81f]"><div className="h-[10px] w-[9px] border-[2.5px] border-r-0 border-white" /></Cell>
    </Cell>
    <Cell className="h-full w-[33px] border-b border-[#76b9ed]">
      <Cell className="h-4 w-4 bg-[#e2483d]"><div className="h-[10px] w-[9px] border-[2.5px] border-r-0 border-white" /></Cell>
    </Cell>
    <div className="grow" />
    <Cell className="w-[18px]">
      <svg width="15" height="15" viewBox="0 0 15 15"><circle cx="6.500" cy="5.500" r="5" fill="#f7a928" /><path d="M3 14q-3-1-1-4 2-2 4 0 1-4 5-3 3 1 3 4t-3 3z" fill="#cfe0f2" /></svg>
    </Cell>
    <span className="ml-[4px] w-[24px] text-[8.500px] whitespace-nowrap">64°F</span>
    <span className="w-[56px] text-[8.800px] tracking-[-0.100px] whitespace-nowrap">Partly sunny</span>
    <Cell className="w-[16px]"><ChevronUp size={11} /></Cell>
    <Cell className="w-[16px]"><div className="h-[9px] w-[7px] rounded-[2px] border border-[#ccc]" /></Cell>
    <Cell className="w-[16px]"><Wifi size={10} /></Cell>
    <Cell className="w-[16px]"><Volume2 size={11} /></Cell>
    <div className="w-[41px] shrink-0 text-center text-[8.300px] leading-[11px] tracking-[-0.300px]">7:20 PM<br />5/24/2022</div>
    <Cell className="mr-[5px] w-[30px]">
      <svg width="16" height="18" viewBox="0 0 16 18" fill="none" stroke="#eee"><path d="M1 1h10v8H6l-2 3V9H1zM3 3.500h6M3 6h6" /><circle cx="10.500" cy="12" r="4.500" stroke="#aaa" /><path d="M10.500 10v4" /></svg>
    </Cell>
  </div>
);

const HandCursor = () => (
  <svg width="13" height="17" viewBox="0 0 13 17" className="absolute top-[425px] left-[256px]">
    <path d="M4 1.500q1.500-1 2 .5v4q2-.6 2.500.3 1.700-.3 2 .7 1.800 0 1.800 1.500v3.500q0 3-2 4.500H5q-1-2.500-4-6 .5-1.500 3 .3z" fill="#fff" stroke="#111" strokeWidth="1" />
  </svg>
);

const Player = () => (
  <div className="relative h-[717px] w-[1891px] shrink-0 bg-black">
    <div className="relative ml-[309px] flex h-[716px] w-[1274px] flex-col overflow-hidden">
      <TravelBrowser />
      <TravelPage />
      <VideoTaskbar />
      <div className={`absolute top-[675px] left-0 flex h-[14px] w-[167px] items-center bg-[#86cd87] pl-[4px] text-[8.300px] tracking-[-0.240px] whitespace-nowrap text-[#1c2a1c] ${UI}`}>file:///C:/Users/fc/Desktop/Travel/index.html#</div>
      <HandCursor />
    </div>
    <div className="absolute inset-x-0 bottom-0 flex h-[285px] flex-col bg-[linear-gradient(to_bottom,transparent_0%,rgba(0,0,0,0.12)_31%,rgba(0,0,0,0.19)_46%,rgba(0,0,0,0.28)_67%,rgba(0,0,0,0.31)_80%,rgba(0,0,0,0.47)_90%,rgba(0,0,0,0.72)_100%)] pl-[15px] text-[#eee]">
      <div className="mt-[221px] flex h-[4px] w-[1861px] bg-white/20">
        <div className="w-[33px] bg-[#f00]" />
        <div className="w-[30px] bg-white/35" />
      </div>
      <div className="flex h-[60px] items-center">
        <Cell className="w-[58px]"><Glyph d={PLAY} size={53} view="0 0 36 36" /></Cell>
        <Cell className="w-[59px]"><Glyph d={NEXT} size={59} view="0 0 36 36" /></Cell>
        <Cell className="w-[61px]"><Glyph d={VOLUME} size={47} view="0 0 36 36" /></Cell>
        <span className="ml-[6px] font-['Roboto'] text-[16.350px] text-[#ddd]">0:47 / 45:11</span>
        <div className="grow" />
        <Cell className="mr-[6px] w-[60px]">
          <div className="relative h-[14px] w-[38px] rounded-full bg-white/50">
            <Cell className="absolute -top-[4px] right-[-5px] h-[22px] w-[22px] rounded-full bg-[#eee]">
              <svg width="9" height="11" viewBox="0 0 9 11"><path d="M1 0l8 5.500L1 11z" fill="#3d2f8c" /></svg>
            </Cell>
          </div>
        </Cell>
        <Cell className="w-[60px] text-[#808080]"><Glyph d={CAPTIONS} size={56} view="0 0 36 36" evenOdd /></Cell>
        <Cell className="w-[60px]">
          <div className="relative">
            <Glyph d={SETTINGS} size={54} view="0 0 36 36" />
            <Cell className="absolute top-[9px] left-[35px] h-[12px] w-[16px] rounded-[2px] bg-[#e00] font-['Roboto'] text-[9px] font-bold text-white">HD</Cell>
          </div>
        </Cell>
        <Cell className="w-[60px]"><Glyph d={MINI} size={50} view="0 0 36 36" evenOdd /></Cell>
        <Cell className="w-[60px]"><div className="h-[16px] w-[25px] border-[3px] border-[#eee]" /></Cell>
        <Cell className="mr-[14px] w-[60px]"><Glyph d={FULL} size={56} view="0 0 36 36" /></Cell>
      </div>
    </div>
    <div className="absolute top-[18px] left-[1841px] flex h-[25px] w-[25px] items-center justify-center rounded-full bg-[#e9e9e9]">
      <svg width="6" height="15" viewBox="0 0 6 15" fill="#111"><rect x="1.500" width="3" height="3" /><rect x="1.500" y="5" width="3" height="10" /></svg>
    </div>
    <div className="absolute top-[591px] left-[1826px] flex h-[50px] w-[50px] flex-col items-center bg-[#aea7a9] font-['Lato'] text-[15px] leading-[17px] font-black tracking-[1.500px] text-[#3e3c3e]">
      <span>SUB</span><span>SCR</span><span>IVE.</span>
    </div>
  </div>
);

const Details = () => (
  <div className="flex h-[141px] w-[1891px] shrink-0 overflow-hidden font-['Roboto'] text-[#f1f1f1]">
    <div className="ml-[30px] w-[1170px] shrink-0">
      <h1 className="mt-[15px] h-[35px] text-[25px] leading-[35px] font-bold whitespace-nowrap">Build A Responsive Tour &amp; Travel Website Design Using Only HTML And CSS | Pure HTML &amp; CSS Tutorial</h1>
      <div className="mt-[10px] flex h-[50px] items-center">
        <Cell className="h-[50px] w-[50px] flex-col rounded-full border-[1.5px] border-white bg-[#03031c] font-['Lato'] text-[10.500px] leading-[10.500px] font-black"><span>TAHMID</span><span>AHMED</span></Cell>
        <div className="ml-[15px] w-[165px] pt-[3px] whitespace-nowrap">
          <div className="text-[20px] leading-[27px] font-medium">Tahmid Ahmed</div>
          <div className="text-[15px] leading-[24px] text-[#aaa]">48.7K subscribers</div>
        </div>
        <Cell className="mt-[3px] h-[45px] w-[118px] rounded-full bg-[#f1f1f1] text-[17.500px] font-medium text-[#0f0f0f]">Subscribe</Cell>
        <div className="grow" />
        <div className="mt-[3px] flex h-[45px] gap-[10px] text-[17.500px] font-medium">
          <div className="flex w-[156px] items-center rounded-full bg-[#272727] pl-[11px]">
            <Glyph d={THUMB} size={30} />
            <span className="ml-[9px] w-[33px] pt-px">3K</span>
            <div className="ml-[6px] h-[30px] w-px bg-[#4f4f4f]" />
            <Glyph d={THUMB} size={30} className="ml-[14px] rotate-180" />
          </div>
          <div className="flex w-[115px] items-center rounded-full bg-[#272727] pl-[12px]"><Glyph d={SHARE} size={30} /><span className="ml-[7px] pt-px">Share</span></div>
          <div className="flex w-[148px] items-center rounded-full bg-[#272727] pl-[12px]"><Glyph d={DOWNLOAD} size={30} /><span className="ml-[7px] pt-px">Download</span></div>
          <Cell className="w-[45px] gap-[4px] rounded-full bg-[#272727]">
            {[0, 1, 2].map((i) => <div key={i} className="h-[4px] w-[4px] rounded-full bg-[#f1f1f1]" />)}
          </Cell>
        </div>
      </div>
      <div className="mt-[18px] h-10 rounded-t-[15px] bg-[#272727]" />
    </div>
    <div className="ml-[30px] w-[500px] shrink-0">
      <div className="mt-[40px] flex h-[40px] gap-[10px] text-[17.500px] font-medium whitespace-nowrap">
        <Cell className="w-[51px] rounded-[10px] bg-[#f1f1f1] pt-px text-[#0f0f0f]">All</Cell>
        <Cell className="w-[192px] rounded-[10px] bg-[#272727] pt-px">From Tahmid Ahmed</Cell>
        <Cell className="w-[78px] rounded-[10px] bg-[#272727] pt-px">HTML</Cell>
        <div className="flex w-[87px] items-center rounded-l-[10px] bg-[#272727] [mask-image:linear-gradient(to_right,black_60%,transparent)] pt-px pl-[15px]">Related</div>
        <Cell className="ml-[9px] w-[30px]"><svg width="10" height="17" viewBox="0 0 10 17" fill="none" stroke="#f1f1f1" strokeWidth="1.500"><path d="M1 1l7.500 7.500L1 16" /></svg></Cell>
      </div>
      <div className="mt-[23px] flex">
        <div className="relative h-[118px] w-[210px] shrink-0 overflow-hidden rounded-[10px] bg-[#0a0a18]">
          <svg width="210" height="118" viewBox="0 0 210 118">
            <defs><linearGradient id="th" x1="0" x2="1" y1="0" y2="0"><stop offset="0" stopColor="#15150f" /><stop offset=".3" stopColor="#12122a" /><stop offset=".5" stopColor="#0c1250" /><stop offset=".8" stopColor="#1a2aa0" /></linearGradient></defs>
            <rect width="210" height="118" fill="url(#th)" />
            <path d="M0 0h150v5H0zM38 0h8v24h-8z" fill="#0b0b0b" />
            <path d="M66 12h26v26H66z" fill="#3a1d12" /><path d="M72 18h12v16H72z" fill="#5a2a18" />
            <path d="M42 38q2-14 10-14t14 14z" fill="#0d0a12" /><circle cx="98" cy="22" r="10" fill="#140e1c" /><path d="M88 38q2-14 16-14t18 14z" fill="#1c100c" />
            <path d="M138 26h28v12h-28z" fill="#080a1c" /><path d="M126 6h3v16h-3z" fill="#0a0a20" />
            <path d="M178 0h32v118h-20z" fill="#060604" />
            <path d="M170 0l16 38M176 0l14 38M170 4l8-2M173 12l7 0M177 22l7 0M181 32l7-1" stroke="#e8c9a8" strokeWidth="1.500" fill="none" />
          </svg>
          <div className="absolute top-[6px] left-[14px] text-[4.500px] leading-[8px] font-black tracking-[0.600px] whitespace-nowrap text-[#ddd]">SHERYIANS CODING SCHOOL</div>
        </div>
        <div className="ml-[10px] pt-px text-[17.500px] leading-[25px] font-medium whitespace-nowrap">
          <div className="flex items-center pl-[3px]">
            <svg width="18" height="18" viewBox="0 0 18 18" className="mr-[7px]"><circle cx="9" cy="9" r="8.500" fill="#6fb7ec" /><path d="M9 .5v17M.5 9h17M2 4.500h14M2 13.500h14" stroke="#173a5c" fill="none" /><ellipse cx="9" cy="9" rx="4.500" ry="8.500" fill="none" stroke="#173a5c" /></svg>
            Responsive Web
          </div>
          <div>Development: Building Websit</div>
        </div>
      </div>
    </div>
  </div>
);

/* ---------- Windows taskbar ---------- */

const GEAR_TEETH = [0, 60, 120, 180, 240, 300];

const Taskbar = () => (
  <div className={`flex h-[60px] shrink-0 items-center border-t border-[#4a4a4a] bg-[#202221] text-white ${UI}`}>
    <div className="flex w-[585px] shrink-0 items-center">
      <div className="relative ml-[25px] h-[44px] w-[39px]">
        <svg width="30" height="28" viewBox="0 0 30 28" fill="none" stroke="#86a5cc" strokeWidth="2.800" className="absolute top-[12px] left-0">
          <path d="M0 10h21q5-1 5-5M0 15h24q4 .5 3 4-2 3-5 0M0 15h17q4 1 3 5-2 4-5 1M12 8q-1-5 4-6" />
        </svg>
        <Cell className="absolute top-0 left-[14px] h-[20px] w-[20px] rounded-full bg-[#ff99a4] text-[12px] text-black">1</Cell>
      </div>
      <div className="-mt-[4px] text-[15px] leading-[20px] tracking-[-0.300px]">
        <div>22°C</div><div className="text-[#c5c5c5]">Windy</div>
      </div>
    </div>
    <div className="grid h-[29px] w-[29px] shrink-0 grid-cols-2 gap-px">
      <div className="rounded-tl-[2px] bg-linear-to-br from-[#7fe6fd] to-[#5ed2fb]" />
      <div className="rounded-tr-[2px] bg-linear-to-br from-[#66d6fb] to-[#3fbffa]" />
      <div className="rounded-bl-[2px] bg-linear-to-br from-[#58d0fb] to-[#2fb0f9]" />
      <div className="rounded-br-[2px] bg-linear-to-br from-[#38b8fa] to-[#0f94f5]" />
    </div>
    <div className="ml-[17px] flex h-[40px] w-[275px] shrink-0 items-center rounded-full border border-[#555] bg-[#3d3f3e] pl-[13px]">
      <Search size={21} strokeWidth={2.200} color="#ddd" />
      <span className="ml-[11px] w-[161px] text-[15.800px] text-[#ccc]">Search</span>
      <svg width="63" height="34" viewBox="0 0 63 34">
        <defs><clipPath id="boatClip"><path d="M0 30q4-10 20-18V2q30-4 38 4 6 8 4 18-2 8-10 9H12Q2 33 0 30z" /></clipPath></defs>
        <g clipPath="url(#boatClip)">
          <rect width="63" height="34" fill="#4fb0cf" />
          <path d="M20 0h43v12H20z" fill="#7fb24a" />
          <path d="M36 4h27v10H36z" fill="#e9c98a" /><path d="M41 5h6v8h-6zM53 5h6v8h-6z" fill="#d9745a" />
          <path d="M38 7h2v2h-2zM43 7h2v2h-2zM49 7h2v2h-2zM55 7h2v2h-2zM49 10h2v2h-2z" fill="#5b6f9a" />
          <path d="M20 2h6v10h-6z" fill="#c9844f" />
          <path d="M0 28q25-8 60-4v10H0z" fill="#2f93bd" />
        </g>
        <path d="M26 15q12 4 24 3-1 5-6 5-12-1-18-8z" fill="#8a4a34" stroke="#eadccb" strokeWidth=".8" />
        <path d="M10 14q10 9 30 12-1 4-5 4-19-2-25-16z" fill="#7a3f2a" stroke="#f4f4f4" strokeWidth="1.200" />
        <path d="M12 21q10 7 24 8" stroke="#2f57a8" strokeWidth="1.500" fill="none" />
      </svg>
    </div>
    <Cell className="ml-[2px] w-[55px]">
      <svg width="31" height="29" viewBox="0 0 31 29">
        <defs><linearGradient id="tv" x1="0" y1="0" x2="1" y2="1"><stop offset="0" stopColor="#fff" /><stop offset="1" stopColor="#d8d8d8" /></linearGradient></defs>
        <rect x="8" y="0" width="22" height="20" rx="1.500" fill="url(#tv)" /><rect x="0" y="8" width="22" height="20" rx="1.500" fill="#6d6d6d" /><rect x="8" y="8" width="14" height="12" fill="#b4b4b4" />
      </svg>
    </Cell>
    <Cell className="w-[55px]">
      <svg width="30" height="30" viewBox="0 0 30 30">
        {GEAR_TEETH.map((a) => <rect key={a} x="11" y="0.500" width="8" height="10" rx="2" fill="#7c8792" transform={`rotate(${a + 30} 15 15)`} />)}
        <circle cx="15" cy="15" r="11.200" fill="#7c8792" /><circle cx="15" cy="15" r="6.800" fill="#f2f4f6" /><circle cx="15" cy="15" r="5" fill="#0f5bb0" />
      </svg>
    </Cell>
    <Cell className="w-[55px]">
      <svg width="30" height="27" viewBox="0 0 30 27">
        <defs><linearGradient id="fo" x1="0" y1="0" x2="1" y2="1"><stop offset="0" stopColor="#ffdc66" /><stop offset="1" stopColor="#fbb813" /></linearGradient></defs>
        <path d="M0 2q0-2 2-2h8l3 4v6H0z" fill="#dfa00e" /><path d="M0 5h11l2-2h15q2 0 2 2v20q0 1.500-1.500 1.500h-27Q0 26.500 0 25z" fill="url(#fo)" />
        <path d="M5 26.500V21q0-2 2-2h16q2 0 2 2v5.500z" fill="#1579cf" /><path d="M9 22.500h12" stroke="#0b4f94" strokeWidth="1.500" />
      </svg>
    </Cell>
    <Cell className="w-[55px]">
      <div className="relative flex h-[50px] w-[50px] items-center justify-center rounded-[5px] bg-[#48282a]">
        <VscVscode size={31} color="#2a9de8" />
        <div className="absolute bottom-[1px] left-[21px] h-[4px] w-[8px] rounded-full bg-[#ff99a4]" />
      </div>
    </Cell>
    <Cell className="w-[55px]">
      <svg width="29" height="30" viewBox="0 0 29 30">
        <path d="M8 7V1.500q0-1 1-1h11q1 0 1 1V7" fill="none" stroke="#35b2f0" strokeWidth="2" />
        <path d="M0 5h29v22q0 2.500-2.500 2.500h-24Q0 29.500 0 27z" fill="#ececec" />
        <path d="M9 12h5v5H9z" fill="#f25022" /><path d="M15 12h5v5h-5z" fill="#7fba00" /><path d="M9 18h5v5H9z" fill="#00a4ef" /><path d="M15 18h5v5h-5z" fill="#ffb900" />
      </svg>
    </Cell>
    <Cell className="w-[55px]"><div className="rounded-full bg-black"><FaSpotify size={29} color="#1ed760" /></div></Cell>
    <Cell className="w-[55px]">
      <div className="relative flex h-[50px] w-[50px] items-center justify-center rounded-[5px] border border-[#3a3c3b] bg-[#2d2f2f]">
        <EdgeBall size={30} id="et" />
        <div className="absolute bottom-0 left-[14px] h-[4px] w-[20px] rounded-full bg-[#4cc2ff]" />
      </div>
    </Cell>
    <Cell className="w-[55px]">
      <svg width="29" height="29" viewBox="0 0 29 29">
        <defs><linearGradient id="ff" x1=".8" y1="0" x2=".3" y2="1"><stop offset="0" stopColor="#ffe84a" /><stop offset=".45" stopColor="#ff8a1f" /><stop offset="1" stopColor="#f01c6a" /></linearGradient></defs>
        <path d="M16 7q-1-5 3-7 1 4 4 6 6 5 5.500 11Q27 29 14.500 29T.5 17Q.500 10 3 6q0 3 1 3 1-4 4-6 0 3 8 4z" fill="url(#ff)" />
        <circle cx="14.500" cy="15" r="6" fill="#8a3ff0" /><path d="M5 12q4-2 8 1-1 2-4 2-1 4 4 5-6 1-8-3z" fill="#ff9a2a" />
      </svg>
    </Cell>
    <div className="grow" />
    <Cell className="w-[30px]"><ChevronUp size={20} strokeWidth={2} /></Cell>
    <div className="ml-[13px] w-[40px] shrink-0 text-center text-[14.500px] leading-[20px] tracking-[-0.300px]">ENG<br />IN</div>
    <Cell className="ml-[12px] w-[31px]"><Wifi size={20} strokeWidth={1.800} /></Cell>
    <Cell className="w-[28px]">
      <svg width="20" height="18" viewBox="0 0 20 18" fill="none" stroke="#fff" strokeWidth="1.300"><path d="M1 6h4l5-4.500v15L5 12H1zM12.500 6q2 3 0 6M15 3.500q3.500 5.500 0 11" /><path d="M17.500 1.500q4 7.500 0 15" stroke="#777" /></svg>
    </Cell>
    <Cell className="w-[34px]">
      <svg width="20" height="14" viewBox="0 0 20 14"><rect x=".7" y=".7" width="16" height="12.500" rx="2.500" fill="none" stroke="#fff" strokeWidth="1.400" /><rect x="3" y="3" width="9" height="8" rx="1" fill="#fff" /><rect x="17.500" y="4.500" width="2" height="5" rx="1" fill="#fff" /></svg>
    </Cell>
    <div className="-mt-[2px] w-[91px] shrink-0 text-right text-[14.900px] leading-[20px] tracking-[-0.200px]">21:40<br />19-02-2024</div>
    <Cell className="w-[38px]"><FaBell size={19} color="#99ebff" /></Cell>
    <div className="relative mr-[24px] ml-[12px] h-[30px] w-[30px]">
      <svg width="30" height="28" viewBox="0 0 30 28">
        <defs>
          <linearGradient id="pA" x1="0" y1="0" x2="0" y2="1"><stop offset="0" stopColor="#2a7be8" /><stop offset=".6" stopColor="#4fc07a" /><stop offset="1" stopColor="#e8d21c" /></linearGradient>
          <linearGradient id="pB" x1="0" y1="0" x2="0" y2="1"><stop offset="0" stopColor="#9a5cf0" /><stop offset="1" stopColor="#f0608a" /></linearGradient>
        </defs>
        <path d="M14 0h4q3 0 5 6l1 2h-9z" fill="#2347c8" /><path d="M9 0h9q-3 1-4 6l-3 11q-1 4-4 4H3q-4 0-3-5L4 4q1-4 5-4z" fill="url(#pA)" />
        <path d="M19 8h6q4 0 3 5l-3 9q-1 3-5 3h-7q2-1 3-5z" fill="url(#pB)" />
      </svg>
      <Cell className="absolute top-[19px] left-[7px] h-[12px] w-[22px] rounded-[2px] bg-[#ffc40f] text-[9px] font-bold text-black">PRE</Cell>
    </div>
  </div>
);

export default function App() {
  return (
    <div className="flex h-[1080px] w-[1920px] flex-col overflow-hidden bg-[#3b3b3b]">
      <TabStrip />
      <AddressBar />
      <div className="flex h-[932px] shrink-0 pl-[5px]">
        <div className="flex h-[928px] w-[1910px] overflow-hidden rounded-[9px] bg-[#0f0f0f]">
          <div className="flex w-[1891px] shrink-0 flex-col">
            <Masthead />
            <Player />
            <Details />
          </div>
          <div className="flex w-[19px] flex-col items-center">
            <div className="mt-[10px] border-x-[6px] border-b-[9px] border-x-transparent border-b-[#9f9f9f]" />
            <div className="mt-[10px] h-[230px] w-[11px] rounded-full bg-[#9f9f9f]" />
            <div className="grow" />
            <div className="mb-[9px] border-x-[6px] border-t-[9px] border-x-transparent border-t-[#9f9f9f]" />
          </div>
        </div>
      </div>
      <Taskbar />
    </div>
  );
}
